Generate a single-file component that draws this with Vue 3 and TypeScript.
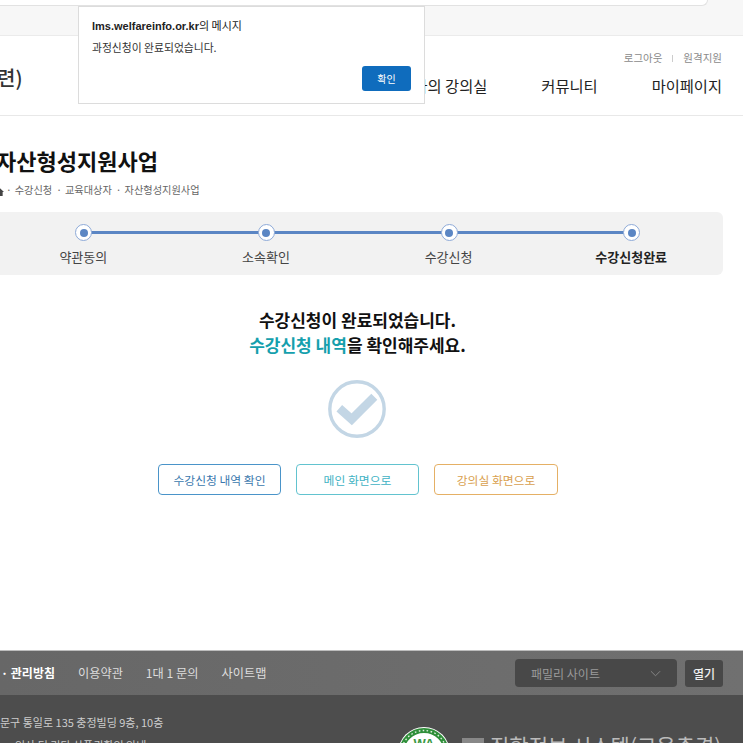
<script setup lang="ts">
const steps = ['약관동의', '소속확인', '수강신청', '수강신청완료']
const crumbs = ['수강신청', '교육대상자', '자산형성지원사업']
const footerLinks = ['이용약관', '1대 1 문의', '사이트맵']
</script>

<template>
  <div class="page">
    <div class="browser"><div class="url"></div></div>
    <header class="header">
      <div class="brand">련)</div>
      <div class="header-right">
        <div class="util"><span>로그아웃</span><i></i><span>원격지원</span></div>
        <nav class="nav"><span>나의 강의실</span><span>커뮤니티</span><span>마이페이지</span></nav>
      </div>
    </header>

    <main class="main">
      <h1 class="title">자산형성지원사업</h1>
      <div class="crumbs">
        <svg class="home" viewBox="0 0 10 10"><path d="M5 1 0 5.5h1.5V10h7V5.5H10z" fill="#444" /></svg>
        <span v-for="c in crumbs" :key="c" class="crumb"><b>·</b>{{ c }}</span>
      </div>

      <div class="steps">
        <div class="line"></div>
        <div v-for="(s, i) in steps" :key="s" class="step" :class="{ current: i === 3 }">
          <span class="dot"><span></span></span>
          <span class="label">{{ s }}</span>
        </div>
      </div>

      <div class="msg">
        <p>수강신청이 완료되었습니다.</p>
        <p><em>수강신청 내역</em>을 확인해주세요.</p>
      </div>

      <svg class="check" viewBox="0 0 58 58">
        <circle cx="29" cy="29" r="27.2" fill="none" stroke="#c3d6e5" stroke-width="3.4" />
        <path d="M11.3 28.3 23.7 39.3 46.3 16.7" fill="none" stroke="#c3d6e5" stroke-width="8.5" />
      </svg>

      <div class="actions">
        <button class="btn blue">수강신청 내역 확인</button>
        <button class="btn teal">메인 화면으로</button>
        <button class="btn orange">강의실 화면으로</button>
      </div>
    </main>

    <footer class="footer">
      <div class="f-bar">
        <div class="f-links">
          <b>· 관리방침</b>
          <span v-for="l in footerLinks" :key="l">{{ l }}</span>
        </div>
        <div class="f-select">
          <div class="select"><span>패밀리 사이트</span>
            <svg viewBox="0 0 12 7"><path d="M1 1l5 5 5-5" fill="none" stroke="#8a8a8a" stroke-width="1" /></svg>
          </div>
          <button class="open">열기</button>
        </div>
      </div>
      <div class="f-body">
        <div class="addr">
          <p>문구 통일로 135 충정빌딩 9층, 10층</p>
          <p class="addr-2">인사 팀 기타 상품권확인 안내</p>
        </div>
        <div class="cert">
          <svg class="seal" viewBox="0 0 52 52">
            <circle cx="26" cy="26" r="26" fill="#fff" />
            <circle cx="26" cy="26" r="22.5" fill="none" stroke="#2f8f3a" stroke-width="5" />
            <circle cx="26" cy="26" r="22.5" fill="none" stroke="#dfeedd" stroke-width="1.4" stroke-dasharray="1.6 2.4" />
            <text x="26" y="21" text-anchor="middle" font-size="13" font-weight="700" fill="#3c9a45" font-family="Liberation Sans, sans-serif">WA</text>
          </svg>
          <div class="cert-text"><i></i>집합정보 시스템(고용충격)</div>
        </div>
      </div>
    </footer>

    <div class="dialog">
      <div class="d-title"><b>lms.welfareinfo.or.kr</b>의 메시지</div>
      <div class="d-text">과정신청이 완료되었습니다.</div>
      <div class="d-foot"><button>확인</button></div>
    </div>
  </div>
</template>

<style>
html, body { margin: 0; overflow: hidden; background: #fff; }
</style>

<style scoped>
.page { position: relative; width: 743px; height: 743px; overflow: hidden; font-family: "Noto Sans CJK KR", "Noto Sans", sans-serif; color: #222; }
p, h1 { margin: 0; }
.browser { height: 35px; background: #f7f7f7; border-bottom: 1px solid #ebebeb; }
.url { width: 707px; height: 5px; background: #fff; border: 1px solid #e2e2e2; border-width: 0 1px 1px 0; border-radius: 0 0 10px 0; }
.header { height: 79px; border-bottom: 1px solid #e8e8e8; display: flex; justify-content: space-between; padding-right: 21px; }
.brand { margin-left: -3px; margin-top: 27px; font-size: 20px; line-height: 30px; font-weight: 500; color: #333; }
.header-right { display: flex; flex-direction: column; align-items: flex-end; }
.util { margin-top: 14px; display: flex; align-items: center; gap: 10px; font-size: 10.5px; line-height: 16px; color: #8a8a8a; }
.util i { width: 1px; height: 7px; background: #ccc; }
.nav { margin-top: 7px; display: flex; gap: 54px; font-size: 15.3px; line-height: 24px; color: #222; }
.main { height: 534px; box-sizing: border-box; padding-top: 31px; }
.title { margin: -2px 0 0 -4px; font-size: 22px; line-height: 30px; font-weight: 700; color: #111; }
.crumbs { margin: 7px 0 0 -5px; display: flex; align-items: center; font-size: 10.2px; line-height: 16px; color: #666; }
.home { width: 9px; height: 9px; margin-top: 3px; }
.crumb b { font-weight: 400; margin: 0 3px 0 2px; }
.crumb { margin-right: 2px; }
.steps { position: relative; margin: 14px 0 0 -7.5px; width: 730.5px; height: 63px; background: #f2f2f2; border-radius: 6px; display: grid; grid-template-columns: repeat(4, 1fr); }
.line { position: absolute; left: 91px; right: 91px; top: 19px; height: 3px; background: #5b86c4; }
.step { position: relative; display: flex; flex-direction: column; align-items: center; }
.dot { width: 17px; height: 17px; margin-top: 12px; box-sizing: border-box; background: #fff; border: 1px solid #8eaad8; border-radius: 50%; display: flex; align-items: center; justify-content: center; z-index: 1; }
.dot span { width: 8px; height: 8px; border-radius: 50%; background: #5b86c4; }
.label { margin-top: 6px; margin-left: -1px; font-size: 13px; line-height: 20px; color: #444; }
.current .label { font-weight: 700; color: #222; }
.msg { margin-top: 32px; text-align: center; margin-left: -28px; font-size: 17px; line-height: 25px; font-weight: 700; color: #111; }
.msg em { font-style: normal; color: #15a0ad; }
.check { display: block; width: 58px; height: 58px; margin: 23px 0 0 328px; }
.actions { margin: 26px 0 0 158px; display: flex; gap: 15px; }
.btn { width: 123px; height: 31px; padding: 0; background: #fff; border: 1px solid; border-radius: 4px; font: 400 11.8px "Noto Sans CJK KR", sans-serif; }
.blue { border-color: #4a94c9; color: #3a78ad; }
.teal { border-color: #62c3cf; color: #3fb3c4; }
.orange { border-color: #e5b065; color: #d9a04e; width: 124px; }
.footer { height: 93px; border-top: 1px solid #bdbdbd; }
.f-bar { height: 44px; background: linear-gradient(90deg, #676767, #707070); display: flex; justify-content: space-between; align-items: center; padding-right: 20px; box-sizing: border-box; }
.f-links { display: flex; gap: 23px; font-size: 12.2px; color: #ddd; margin-left: 1px; }
.f-links b { color: #fff; font-weight: 700; font-size: 12px; }
.f-select { display: flex; gap: 8px; align-items: center; }
.select { width: 162px; height: 28px; box-sizing: border-box; padding: 0 16px; background: #484848; border-radius: 4px; display: flex; align-items: center; justify-content: space-between; font-size: 12px; color: #9a9a9a; }
.select svg { width: 11px; height: 7px; }
.open { width: 38px; height: 27px; padding: 0; border: 0; border-radius: 3px; background: #484848; color: #eee; font: 500 12px "Noto Sans CJK KR", sans-serif; }
.f-body { height: 48px; background: #4d4d4d; display: flex; position: relative; }
.addr { padding-top: 16px; font-size: 11px; line-height: 23px; color: #ccc; }
.addr-2 { margin-left: 15px; white-space: nowrap; }
.cert { position: absolute; left: 398px; top: 32px; display: flex; gap: 12px; }
.seal { width: 52px; height: 52px; }
.cert-text { font-size: 21px; line-height: 28px; color: #bbb; display: flex; gap: 6px; margin-top: 4px; white-space: nowrap; }
.cert-text i { width: 22px; height: 10px; margin-top: 7px; background: #888; }
.dialog { position: absolute; left: 78px; top: 6px; width: 347px; height: 98px; box-sizing: border-box; background: #fff; border: 1px solid #dcdcdc; padding: 10px 13px; }
.d-title { font-size: 11px; line-height: 16px; color: #222; }
.d-title b { font-family: "Liberation Sans", sans-serif; }
.d-text { margin-top: 5px; font-size: 10.8px; line-height: 16px; color: #333; }
.d-foot { display: flex; justify-content: flex-end; margin-top: 11px; }
.d-foot button { width: 49px; height: 25px; padding: 0; border: 0; border-radius: 3px; background: #0f6cbd; color: #fff; font: 400 10px "Noto Sans CJK KR", sans-serif; }
</style>
